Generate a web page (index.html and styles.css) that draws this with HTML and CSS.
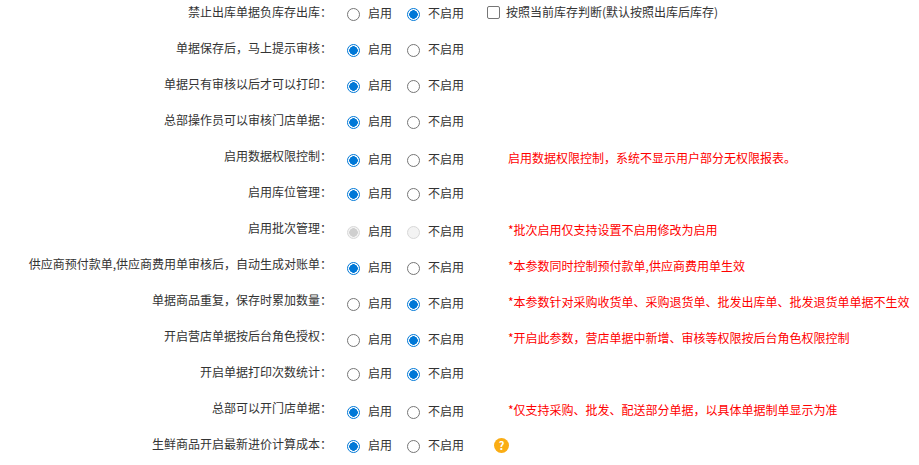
FILE: index.html
```html
<!DOCTYPE html>
<html lang="zh-CN">
<head>
<meta charset="utf-8">
<title>系统参数</title>
<link rel="stylesheet" href="styles.css">
</head>
<body>
<form class="settings">
  <div class="row">
    <div class="name">禁止出库单据负库存出库：</div>
    <div class="options">
      <label class="opt opt-on"><input type="radio" name="r1"><span>启用</span></label>
      <label class="opt"><input type="radio" name="r1" checked><span>不启用</span></label>
    </div>
    <label class="check"><input type="checkbox"><span>按照当前库存判断(默认按照出库后库存)</span></label>
  </div>
  <div class="row">
    <div class="name">单据保存后，马上提示审核：</div>
    <div class="options">
      <label class="opt opt-on"><input type="radio" name="r2" checked><span>启用</span></label>
      <label class="opt"><input type="radio" name="r2"><span>不启用</span></label>
    </div>
  </div>
  <div class="row">
    <div class="name">单据只有审核以后才可以打印：</div>
    <div class="options">
      <label class="opt opt-on"><input type="radio" name="r3" checked><span>启用</span></label>
      <label class="opt"><input type="radio" name="r3"><span>不启用</span></label>
    </div>
  </div>
  <div class="row">
    <div class="name">总部操作员可以审核门店单据：</div>
    <div class="options">
      <label class="opt opt-on"><input type="radio" name="r4" checked><span>启用</span></label>
      <label class="opt"><input type="radio" name="r4"><span>不启用</span></label>
    </div>
  </div>
  <div class="row row-low">
    <div class="name">启用数据权限控制：</div>
    <div class="options">
      <label class="opt opt-on"><input type="radio" name="r5" checked><span>启用</span></label>
      <label class="opt"><input type="radio" name="r5"><span>不启用</span></label>
    </div>
    <div class="note">启用数据权限控制，系统不显示用户部分无权限报表。</div>
  </div>
  <div class="row">
    <div class="name">启用库位管理：</div>
    <div class="options">
      <label class="opt opt-on"><input type="radio" name="r6" checked><span>启用</span></label>
      <label class="opt"><input type="radio" name="r6"><span>不启用</span></label>
    </div>
  </div>
  <div class="row row-low">
    <div class="name">启用批次管理：</div>
    <div class="options">
      <label class="opt opt-on"><input type="radio" name="r7" checked disabled><span>启用</span></label>
      <label class="opt"><input type="radio" name="r7" disabled><span>不启用</span></label>
    </div>
    <div class="note">*批次启用仅支持设置不启用修改为启用</div>
  </div>
  <div class="row row-low">
    <div class="name">供应商预付款单,供应商费用单审核后，自动生成对账单：</div>
    <div class="options">
      <label class="opt opt-on"><input type="radio" name="r8" checked><span>启用</span></label>
      <label class="opt"><input type="radio" name="r8"><span>不启用</span></label>
    </div>
    <div class="note">*本参数同时控制预付款单,供应商费用单生效</div>
  </div>
  <div class="row row-low">
    <div class="name">单据商品重复，保存时累加数量：</div>
    <div class="options">
      <label class="opt opt-on"><input type="radio" name="r9"><span>启用</span></label>
      <label class="opt"><input type="radio" name="r9" checked><span>不启用</span></label>
    </div>
    <div class="note">*本参数针对采购收货单、采购退货单、批发出库单、批发退货单单据不生效</div>
  </div>
  <div class="row row-low">
    <div class="name">开启营店单据按后台角色授权：</div>
    <div class="options">
      <label class="opt opt-on"><input type="radio" name="r10"><span>启用</span></label>
      <label class="opt"><input type="radio" name="r10" checked><span>不启用</span></label>
    </div>
    <div class="note">*开启此参数，营店单据中新增、审核等权限按后台角色权限控制</div>
  </div>
  <div class="row">
    <div class="name">开启单据打印次数统计：</div>
    <div class="options">
      <label class="opt opt-on"><input type="radio" name="r11"><span>启用</span></label>
      <label class="opt"><input type="radio" name="r11" checked><span>不启用</span></label>
    </div>
  </div>
  <div class="row row-low">
    <div class="name">总部可以开门店单据：</div>
    <div class="options">
      <label class="opt opt-on"><input type="radio" name="r12" checked><span>启用</span></label>
      <label class="opt"><input type="radio" name="r12"><span>不启用</span></label>
    </div>
    <div class="note">*仅支持采购、批发、配送部分单据，以具体单据制单显示为准</div>
  </div>
  <div class="row">
    <div class="name">生鲜商品开启最新进价计算成本：</div>
    <div class="options">
      <label class="opt opt-on"><input type="radio" name="r13" checked><span>启用</span></label>
      <label class="opt"><input type="radio" name="r13"><span>不启用</span></label>
    </div>
    <span class="help">?</span>
  </div>
</form>
</body>
</html>
```

FILE: styles.css
```css
html, body {
  margin: 0;
  padding: 0;
  background: #fff;
  overflow: hidden;
}
body {
  font-family: "Noto Sans CJK SC", "Liberation Sans", sans-serif;
  font-size: 12px;
  line-height: 20px;
  color: #333;
}
.settings {
  padding-top: 2px;
}
.row {
  display: flex;
  align-items: flex-start;
  height: 36px;
}
.name {
  width: 332px;
  flex: none;
  text-align: right;
  white-space: nowrap;
}
.options {
  display: flex;
  flex: none;
  width: 140px;
  margin-left: 15px;
  margin-top: 1px;
}
.row-low .options {
  margin-top: 3px;
}
.opt {
  display: flex;
  align-items: center;
  width: 60px;
  height: 20px;
}
.opt input {
  appearance: none;
  box-sizing: border-box;
  width: 13px;
  height: 13px;
  margin: 3px 8px 0 0;
  border: 1px solid #767676;
  border-radius: 50%;
  background: #fff;
  flex: none;
}
.opt input:checked {
  border-color: #0078d7;
  background: radial-gradient(circle, #0078d7 0 4px, #fff 4.5px);
}
.opt input:disabled {
  border-color: #d8d8d8;
  background: #f3f3f3;
}
.opt input:disabled:checked {
  background: radial-gradient(circle, #cfcfcf 0 4px, #f3f3f3 4.5px);
}
.check {
  display: flex;
  align-items: center;
  white-space: nowrap;
  height: 18px;
  margin-top: 1px;
}
.check input {
  appearance: none;
  box-sizing: border-box;
  width: 13px;
  height: 13px;
  margin: 0 6px 0 0;
  border: 1px solid #767676;
  border-radius: 2px;
  background: #fff;
}
.note {
  margin-left: 21px;
  margin-top: 2px;
  color: #f00;
  white-space: nowrap;
}
.help {
  flex: none;
  width: 15px;
  height: 15px;
  margin: 4px 0 0 7px;
  border-radius: 50%;
  background: #faad14;
  color: #fff;
  font-weight: 700;
  font-size: 11px;
  line-height: 15px;
  text-align: center;
}
```
